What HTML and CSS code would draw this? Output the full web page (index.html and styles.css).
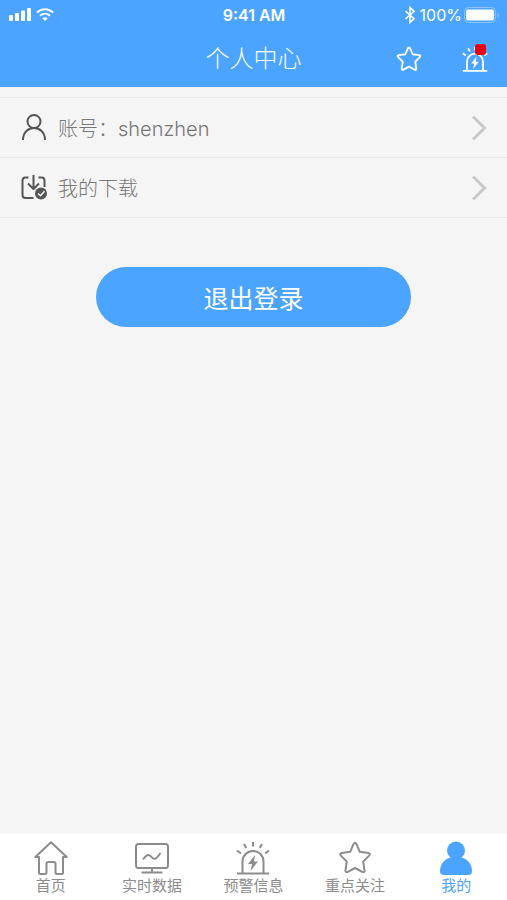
FILE: index.html
```html
<!DOCTYPE html>
<html lang="zh-CN">
<head>
<meta charset="utf-8">
<meta name="viewport" content="width=device-width, initial-scale=1">
<title>个人中心</title>
<link rel="stylesheet" href="styles.css">
</head>
<body>
<header class="top">
  <div class="status">
    <div class="status-left">
      <svg width="24" height="14" viewBox="0 0 24 14" fill="currentColor" aria-hidden="true"><rect x="1" y="7" width="4" height="6" rx="1"/><rect x="7" y="5" width="4" height="8" rx="1"/><rect x="13" y="2.500" width="4" height="10.500" rx="1"/><rect x="19" y="0" width="4" height="13" rx="1"/></svg>
      <svg width="18" height="14" viewBox="0 0 18 14" fill="none" stroke="currentColor" stroke-width="2" aria-hidden="true"><path d="M1 4.500C5.500 0 12.500 0 17 4.500M4 7.800c3-2.800 7-2.800 10 0"/><path d="M9 13 6.300 10.300c1.500-1.400 3.900-1.400 5.400 0z" fill="currentColor" stroke="none"/></svg>
    </div>
    <div class="time">9:41 AM</div>
    <div class="status-right">
      <svg width="12" height="18" viewBox="0 0 12 18" fill="none" stroke="currentColor" stroke-width="1.600" aria-hidden="true"><path d="M1.500 5 10 12.700 6 16.500v-15L10 5.300 1.500 13"/></svg>
      <span class="charge">100%
        <svg width="36" height="16" viewBox="0 0 36 16" aria-hidden="true"><rect x=".5" y=".5" width="31" height="15" rx="4" fill="none" stroke="#8fc5ff"/><rect x="2" y="2.500" width="28" height="11" rx="2" fill="#fff"/><path d="M33.500 5.500c2 1 2 4 0 5z" fill="#8fc5ff"/></svg>
      </span>
    </div>
  </div>
  <div class="titlebar">
    <h1>个人中心</h1>
    <div class="actions">
      <button type="button" aria-label="重点关注">
        <svg width="26" height="26" viewBox="0 0 34 34" class="line" aria-hidden="true"><path d="M15.500 3.200q1.500-2.800 3 0l3.300 7.600 8.600 1.100q2.600.6.700 2.700l-5.900 6 1.300 8.600q.2 2.800-2.300 1.700L17 27l-7.200 3.900q-2.500 1.100-2.300-1.700l1.300-8.600-5.900-6q-1.900-2.100.7-2.700l8.600-1.100z"/></svg>
      </button>
      <button type="button" class="alert" aria-label="预警信息">
        <svg width="26" height="26" viewBox="0 0 34 34" class="line" aria-hidden="true"><path d="M1 32.500h32M6.500 32V20.500a10.500 10.500 0 0 1 21 0V32M17 1v4.500M8 3l2.200 4M26 3l-2.200 4M1 9.500l4 3M33 9.500l-4 3"/><path d="m19 14-7 9h4l-1.500 7 7.500-9.500h-4z" fill="currentColor" stroke="none"/></svg>
        <span class="badge"></span>
      </button>
    </div>
  </div>
</header>
<main>
  <nav class="list" aria-label="个人中心">
    <a class="row" href="#account">
      <svg width="26" height="28" viewBox="0 1 26 28" class="line dark" aria-hidden="true"><circle cx="13" cy="8.500" r="6.500"/><path d="M2 27c0-16 22-16 22 0"/></svg>
      <span class="row-text">账号：shenzhen</span>
      <svg width="16" height="26" viewBox="0 0 16 26" class="chevron" aria-hidden="true"><path d="m2 1.500 11.500 11.500L2 24.500"/></svg>
    </a>
    <a class="row" href="#downloads">
      <svg width="26" height="28" viewBox="0 1 26 28" class="line dark" aria-hidden="true"><path d="M7.500 4.500h-3q-3 0-3 3V22q0 3 3 3h8M17.500 4.500h3q3 0 3 3V14M12.500 2v13M7 10.500l5.500 5.500 5.500-5.500"/><circle cx="20" cy="20.500" r="6" fill="currentColor" stroke="none"/><path d="m17 20.500 2.500 2.200 4-4.500" stroke="#f5f5f5" stroke-width="1.500"/></svg>
      <span class="row-text">我的下载</span>
      <svg width="16" height="26" viewBox="0 0 16 26" class="chevron" aria-hidden="true"><path d="m2 1.500 11.500 11.500L2 24.500"/></svg>
    </a>
  </nav>
  <button type="button" class="logout">退出登录</button>
</main>
<nav class="tabs" aria-label="主导航">
  <a href="#home">
    <svg width="34" height="34" viewBox="0 0 34 34" class="line" aria-hidden="true"><path d="M5 16H1.300L17 1.200 32.700 16H29v15.500q0 1.500-1.500 1.500H23q-1.500 0-1.500-1.500V23q0-2-2-2h-5q-2 0-2 2v8.500q0 1.500-1.500 1.500H6.500Q5 33 5 31.500z"/></svg>
    <span>首页</span>
  </a>
  <a href="#data">
    <svg width="34" height="34" viewBox="0 0 34 34" class="line" aria-hidden="true"><rect x="1" y="3" width="32" height="24" rx="2.500"/><path d="M17 27v4M6.500 31.500h21M8 18.500c5-7 7-4.500 9.500-1.500 2.500 2 4 .5 8-5"/></svg>
    <span>实时数据</span>
  </a>
  <a href="#alerts">
    <svg width="34" height="34" viewBox="0 0 34 34" class="line" aria-hidden="true"><path d="M1 32.500h32M6.500 32V20.500a10.500 10.500 0 0 1 21 0V32M17 1v4.500M8 3l2.200 4M26 3l-2.200 4M1 9.500l4 3M33 9.500l-4 3"/><path d="m19 14-7 9h4l-1.500 7 7.500-9.500h-4z" fill="currentColor" stroke="none"/></svg>
    <span>预警信息</span>
  </a>
  <a href="#favorites">
    <svg width="34" height="34" viewBox="0 0 34 34" class="line" aria-hidden="true"><path d="M15.500 3.200q1.500-2.800 3 0l3.300 7.600 8.600 1.100q2.600.6.700 2.700l-5.900 6 1.300 8.600q.2 2.800-2.300 1.700L17 27l-7.200 3.900q-2.500 1.100-2.300-1.700l1.300-8.600-5.900-6q-1.900-2.100.7-2.700l8.600-1.100z"/></svg>
    <span>重点关注</span>
  </a>
  <a href="#me" class="active" aria-current="page">
    <svg width="34" height="34" viewBox="0 0 34 34" fill="currentColor" aria-hidden="true"><circle cx="17" cy="9.500" r="9"/><path d="M11 16.500h12c6 2 10 7 10 13.500q0 4-4 4H5q-4 0-4-4c0-6.500 4-11.500 10-13.500z"/></svg>
    <span>我的</span>
  </a>
</nav>
</body>
</html>
```

FILE: styles.css
```css
* { box-sizing: border-box; }

body {
  margin: 0;
  min-height: 100vh;
  display: flex;
  flex-direction: column;
  background: #f5f5f5;
  font-family: Inter, "Noto Sans CJK SC", sans-serif;
  font-weight: 300;
}

svg { display: block; flex: none; }
a { color: inherit; text-decoration: none; }
button { border: 0; padding: 0; background: none; color: inherit; font: inherit; cursor: pointer; }

.line {
  fill: none;
  stroke: currentColor;
  stroke-width: 2;
  stroke-linejoin: round;
}

.top { background: #4ba4ff; color: #fff; }

.status,
.titlebar {
  display: grid;
  grid-template-columns: 1fr auto 1fr;
  align-items: center;
}

.status { height: 30px; padding: 0 7px 0 8px; font-size: 16px; font-weight: 400; }
.status-left { display: flex; gap: 4px; }
.time { font-weight: 600; }
.status-right { display: flex; align-items: center; justify-content: flex-end; gap: 4px; }
.charge { display: flex; align-items: center; gap: 2px; }

.titlebar { height: 57px; padding: 0 19px; }
h1 { grid-column: 2; margin: 0; font-size: 24px; line-height: 36px; font-weight: 300; }
.actions { display: flex; justify-content: flex-end; gap: 40px; }
.actions .line { stroke-width: 2.400; }
.alert { position: relative; }
.badge {
  position: absolute;
  top: -2px;
  right: 2px;
  width: 11px;
  height: 11px;
  border-radius: 3px;
  background: #e60012;
}

main { flex: 1; display: flex; flex-direction: column; }

.list { margin-top: 10px; border-top: 1px solid #e9e9e9; }
.row {
  display: flex;
  align-items: center;
  gap: 11px;
  height: 60px;
  padding: 0 20px 0 21px;
  border-bottom: 1px solid #e9e9e9;
  color: #777;
  font-size: 20px;
}
.row-text { flex: 1; }
.dark { color: #555; }
.chevron { fill: none; stroke: #c8c8c8; stroke-width: 3; }

.logout {
  align-self: center;
  width: 62%;
  height: 60px;
  margin-top: 49px;
  border-radius: 30px;
  background: #4ba4ff;
  color: #fff;
  font-size: 25px;
  font-weight: 400;
}

.tabs {
  display: grid;
  grid-template-columns: repeat(5, 1fr);
  height: 66px;
  padding-top: 7px;
  background: #fff;
  color: #8c8c8c;
  font-size: 15px;
  font-weight: 400;
  line-height: 20px;
}
.tabs a { display: flex; flex-direction: column; align-items: center; gap: 1px; }
.tabs .active { color: #4ba4ff; }
```
